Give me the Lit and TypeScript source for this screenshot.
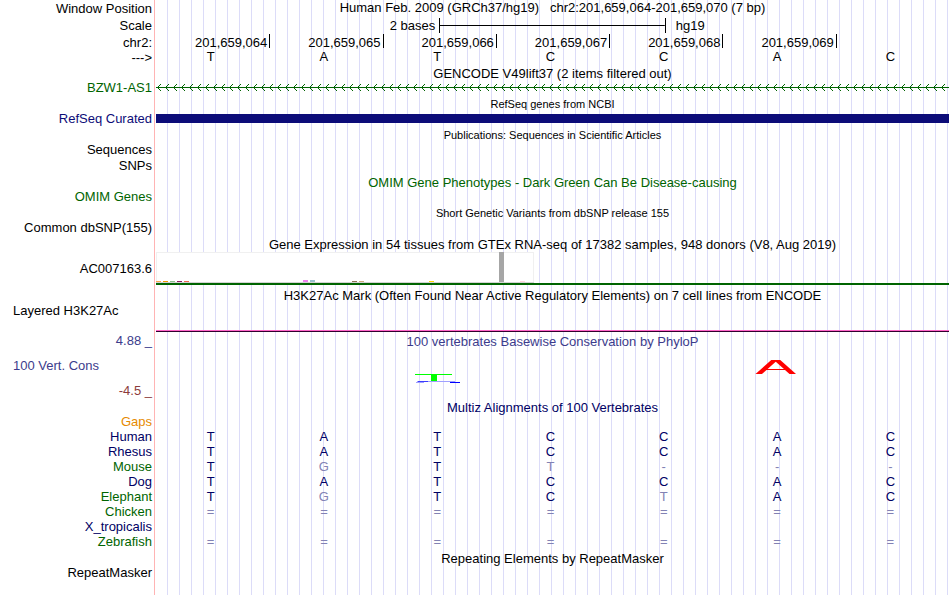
import { LitElement, html, svg, css } from "lit"
import { customElement, property } from "lit/decorators.js"
import { classMap } from "lit/directives/class-map.js"
import { styleMap } from "lit/directives/style-map.js"

interface Species {
  name: string
  tone: "navy" | "green"
  bases: string
}

const START = 201659064
const REFERENCE = "TATCCAC"

// a lower case base differs from the reference
const SPECIES: Species[] = [
  { name: "Human", tone: "navy", bases: "TATCCAC" },
  { name: "Rhesus", tone: "navy", bases: "TATCCAC" },
  { name: "Mouse", tone: "green", bases: "TgTt---" },
  { name: "Dog", tone: "navy", bases: "TATCCAC" },
  { name: "Elephant", tone: "green", bases: "TgTCtAC" },
  { name: "Chicken", tone: "green", bases: "=======" },
  { name: "X_tropicalis", tone: "navy", bases: "       " },
  { name: "Zebrafish", tone: "green", bases: "=======" },
]

const TISSUES = 54

// tissue index -> bar height and colour
const EXPRESSION: Record<number, { height: number; color: string }> = {
  0: { height: 1, color: "#ffa54f" },
  1: { height: 1, color: "#ee9a00" },
  2: { height: 1, color: "#8fbc8f" },
  3: { height: 1, color: "#8b1c62" },
  4: { height: 1, color: "#ee6a50" },
  21: { height: 2, color: "#ee82ee" },
  22: { height: 2, color: "#9ac0cd" },
  28: { height: 1, color: "#8b7355" },
  29: { height: 1, color: "#cdaa7d" },
  39: { height: 1, color: "#ffd700" },
  49: { height: 30, color: "#a6a6a6" },
  52: { height: 1, color: "#ffd5dc" },
}

@customElement("expression-chart")
export class ExpressionChart extends LitElement {
  static styles = css`
    :host {
      display: block;
      border-bottom: 2px solid #006400;
    }

    .bars {
      box-sizing: border-box;
      width: 378px;
      height: 31px;
      display: grid;
      grid-template-columns: repeat(54, 5px);
      column-gap: 2px;
      align-items: end;
      background: #fff;
      box-shadow: inset 0 1px #f0f0f0, inset 1px 0 #f0f0f0, inset -1px 0 #f0f0f0;
      border-bottom: 1px solid #d3d3d3;
    }
  `

  render() {
    return html`
      <div class="bars">
        ${Array.from({ length: TISSUES }, (_, i) => {
          const bar = EXPRESSION[i]
          return html`<span
            style=${styleMap(bar ? { height: `${bar.height}px`, background: bar.color } : {})}
          ></span>`
        })}
      </div>
    `
  }
}

@customElement("genome-track")
export class GenomeTrack extends LitElement {
  static properties = {
    heading: { type: String },
    label: { type: String },
    small: { type: Boolean },
  }

  declare heading: string
  declare label: string
  declare small: boolean

  static styles = css`
    :host {
      display: block;
      color: var(--label, #000);
    }

    .heading {
      margin: 0 0 0 156px;
      padding-top: 3px;
      font-size: 13px;
      font-weight: 400;
      line-height: 13px;
      text-align: center;
      white-space: nowrap;
      color: var(--heading, #000);
    }

    .heading.small {
      padding-top: 2px;
      font-size: 11px;
      line-height: 14px;
    }

    .row {
      display: grid;
      grid-template-columns: 152px minmax(0, 1fr);
      column-gap: 4px;
      min-height: 15px;
    }

    .label {
      align-self: center;
      text-align: right;
    }
  `

  render() {
    return html`
      ${this.heading
        ? html`<h2 class=${classMap({ heading: true, small: this.small })}>${this.heading}</h2>`
        : ""}
      <div class="row">
        <div class="label">${this.label}</div>
        <div><slot></slot></div>
      </div>
    `
  }
}

@customElement("app-root")
export class AppRoot extends LitElement {
  @property({ type: Number }) start = START

  static styles = css`
    :host {
      display: block;
      min-height: 100vh;
      box-sizing: border-box;
      padding-right: 1px;
      font-family: "Liberation Sans", Arial, sans-serif;
      font-size: 13px;
      line-height: 15px;
      color: #000;
      background:
        linear-gradient(#ffb4b4, #ffb4b4) 154px 0 / 1px 100% no-repeat,
        repeating-linear-gradient(to right, transparent 0 11px, #dcdcf8 11px 12px)
          right 0 / calc(100% - 156px) 100% no-repeat,
        #fff;
    }

    .row {
      display: grid;
      grid-template-columns: 152px minmax(0, 1fr);
      column-gap: 4px;
    }

    .label {
      text-align: right;
      white-space: nowrap;
    }

    .position {
      line-height: 17px;
    }

    .title {
      margin: 0;
      font-size: 13px;
      font-weight: 400;
      line-height: 15px;
      text-align: center;
      white-space: pre;
    }

    .scale {
      line-height: 17px;
    }

    .ruler {
      display: grid;
      grid-template-columns: 5fr 4fr 5fr;
      align-items: center;
    }

    .ruler__from {
      text-align: right;
      padding-right: 4px;
    }

    .ruler__to {
      padding-left: 10px;
    }

    .ruler__bar {
      height: 15px;
      border: solid #000;
      border-width: 0 1px;
      background: linear-gradient(#000, #000) center / 100% 1px no-repeat;
    }

    .coords {
      line-height: 17px;
    }

    .columns {
      display: grid;
      grid-template-columns: repeat(7, minmax(0, 1fr));
    }

    .coord {
      height: 14px;
      margin-right: -1px;
      padding-right: 2px;
      border-right: 1px solid #000;
      text-align: right;
    }

    .coord:last-child {
      visibility: hidden;
    }

    .sequence {
      line-height: 13px;
    }

    .sequence .base {
      line-height: 11px;
    }

    .base {
      padding: 0 4px 0 0;
      text-align: center;
    }

    .strand,
    .band {
      display: block;
      width: 100%;
    }

    .band {
      height: 9px;
      margin-top: 3px;
      background: #0c0c78;
    }

    .refseq {
      --label: #0c0c78;
    }

    .gene,
    .omim {
      --label: #006400;
    }

    .omim {
      --heading: #006400;
    }

    .sequences {
      padding-bottom: 1px;
    }

    .expression {
      padding-bottom: 2px;
    }

    .expression expression-chart {
      margin-top: 1px;
    }

    .histone__label {
      padding-left: 13px;
    }

    .histone__signal {
      height: 28px;
      border-bottom: 1px solid #32002d;
      box-shadow: inset 0 -1px #ff64c8;
      margin-bottom: 1px;
    }

    .heading {
      margin: 0;
      padding-top: 2px;
      font-size: 13px;
      font-weight: 400;
      line-height: 14px;
      text-align: center;
    }

    .scores {
      display: flex;
      flex-direction: column;
      justify-content: space-between;
      height: 65px;
      color: #3c3c8c;
      text-align: right;
    }

    .scores__name {
      padding-left: 13px;
      text-align: left;
    }

    .scores__low {
      color: #8c3c3c;
    }

    .phylop {
      color: #3c3c8c;
    }

    .mark {
      display: block;
      margin: 0 auto;
    }

    .alignment {
      width: 100%;
      table-layout: fixed;
      border-spacing: 0;
      color: #000064;
    }

    .alignment caption {
      padding: 3px 0 0 156px;
      line-height: 13px;
    }

    .alignment th {
      width: 152px;
      padding: 0 4px 0 0;
      font-weight: 400;
      text-align: right;
    }

    .alignment td {
      height: 15px;
    }

    .alignment .blank {
      padding: 0;
    }

    .green {
      color: #006400;
    }

    .navy {
      color: #000064;
    }

    .gaps {
      color: #e68a00;
    }

    .faded {
      color: #8282b4;
    }
  `

  private renderStrand() {
    return svg`
      <svg class="strand" height="15" shape-rendering="crispEdges" aria-hidden="true">
        <defs>
          <pattern id="arrows" width="8" height="15" patternUnits="userSpaceOnUse">
            <path
              d="M0 7h8v1H0zM2 6h1v1H2zM2 8h1v1H2zM3 5h1v1H3zM3 9h1v1H3zM4 4h1v1H4zM4 10h1v1H4z"
              fill="#006400"
            />
          </pattern>
        </defs>
        <rect width="100%" height="15" fill="url(#arrows)" />
      </svg>
    `
  }

  private renderMark(column: number) {
    if (column === 2) {
      return html`
        <svg class="mark" width="46" height="36" aria-hidden="true">
          <rect x="1" y="25" width="37" height="1" fill="#00ff00" />
          <rect x="17" y="25" width="6" height="7" fill="#00ff00" />
          <rect x="3" y="32" width="38" height="1" fill="#a0a0ff" />
          <rect x="4" y="32" width="10" height="1" fill="#3c3cff" />
          <rect x="2" y="33" width="8" height="1" fill="#a0a0ff" />
          <rect x="36" y="33" width="10" height="1" fill="#0000ff" />
        </svg>
      `
    }
    if (column === 5) {
      return html`
        <svg class="mark" width="46" height="36" aria-hidden="true">
          <svg y="11" width="46" height="14" stroke="#ff0000">
            <line x1="2.5" y1="16" x2="22.7" y2="-2" stroke-width="4.3" />
            <line x1="41" y1="16" x2="20.8" y2="-2" stroke-width="4.3" />
            <line x1="12" y1="9.5" x2="31" y2="9.5" stroke-width="1" />
          </svg>
        </svg>
      `
    }
    return ""
  }

  private renderSpecies(species: Species) {
    return html`
      <tr>
        <th scope="row" class=${species.tone}>${species.name}</th>
        ${[...species.bases].map(
          (base) => html`
            <td class=${classMap({ base: true, faded: !/[A-Z]/.test(base) })}>
              ${base.toUpperCase()}
            </td>
          `,
        )}
      </tr>
    `
  }

  render() {
    const bases = [...REFERENCE]
    const format = (n: number) => n.toLocaleString("en-US")
    const end = this.start + bases.length - 1

    return html`
      <div class="row position">
        <div class="label">Window Position</div>
        <h1 class="title">${`Human Feb. 2009 (GRCh37/hg19)   chr2:${format(this.start)}-${format(end)} (${bases.length} bp)`}</h1>
      </div>
      <div class="row scale">
        <div class="label">Scale</div>
        <div class="ruler">
          <span class="ruler__from">2 bases</span>
          <span class="ruler__bar"></span>
          <span class="ruler__to">hg19</span>
        </div>
      </div>
      <div class="row coords">
        <div class="label">chr2:</div>
        <div class="columns">
          ${bases.map((_, i) => html`<span class="coord">${format(this.start + i)}</span>`)}
        </div>
      </div>
      <div class="row sequence">
        <div class="label">---&gt;</div>
        <div class="columns">${bases.map((base) => html`<span class="base">${base}</span>`)}</div>
      </div>

      <genome-track class="gene" heading="GENCODE V49lift37 (2 items filtered out)" label="BZW1-AS1">
        ${this.renderStrand()}
      </genome-track>
      <genome-track class="refseq" small heading="RefSeq genes from NCBI" label="RefSeq Curated">
        <span class="band"></span>
      </genome-track>
      <genome-track
        class="sequences"
        small
        heading="Publications: Sequences in Scientific Articles"
        label="Sequences"
      ></genome-track>
      <genome-track label="SNPs"></genome-track>
      <genome-track
        class="omim"
        heading="OMIM Gene Phenotypes - Dark Green Can Be Disease-causing"
        label="OMIM Genes"
      ></genome-track>
      <genome-track
        small
        heading="Short Genetic Variants from dbSNP release 155"
        label="Common dbSNP(155)"
      ></genome-track>
      <genome-track
        class="expression"
        heading="Gene Expression in 54 tissues from GTEx RNA-seq of 17382 samples, 948 donors (V8, Aug 2019)"
        label="AC007163.6"
      >
        <expression-chart></expression-chart>
      </genome-track>

      <div class="row">
        <div></div>
        <h2 class="heading">
          H3K27Ac Mark (Often Found Near Active Regulatory Elements) on 7 cell lines from ENCODE
        </h2>
        <div class="histone__label">Layered H3K27Ac</div>
        <div class="histone__signal"></div>
      </div>

      <div class="row">
        <div class="scores">
          <span>4.88 _</span>
          <span class="scores__name">100 Vert. Cons</span>
          <span class="scores__low">-4.5 _</span>
        </div>
        <div>
          <h2 class="heading phylop">100 vertebrates Basewise Conservation by PhyloP</h2>
          <div class="columns">
            ${bases.map((_, i) => html`<span class="base">${this.renderMark(i)}</span>`)}
          </div>
        </div>
      </div>

      <table class="alignment">
        <caption>Multiz Alignments of 100 Vertebrates</caption>
        <tbody>
          <tr>
            <th scope="row" class="gaps">Gaps</th>
            <td class="blank" colspan="7"></td>
          </tr>
          ${SPECIES.map((species) => this.renderSpecies(species))}
        </tbody>
      </table>

      <genome-track heading="Repeating Elements by RepeatMasker" label="RepeatMasker"></genome-track>
    `
  }
}
